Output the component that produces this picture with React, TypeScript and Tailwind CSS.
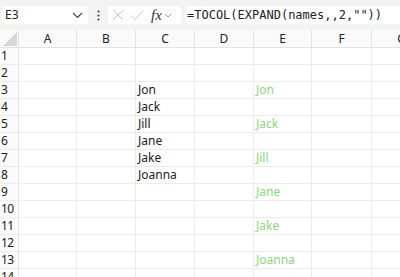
import React from "react"

const cols = [
  { name: "A", w: 58 },
  { name: "B", w: 59 },
  { name: "C", w: 59 },
  { name: "D", w: 59 },
  { name: "E", w: 58 },
  { name: "F", w: 60 },
  { name: "G", w: 60 },
]

const names = ["Jon", "Jack", "Jill", "Jane", "Jake", "Joanna"]

function cellText(row: number, col: string) {
  if (col === "C" && row >= 3 && row <= 8) return names[row - 3]
  if (col === "E" && row >= 3 && row % 2 === 1) return names[(row - 3) / 2] ?? ""
  return ""
}

export default function App() {
  const rows = Array.from({ length: 14 }, (_, i) => i + 1)

  return (
    <div className="w-[400px] h-[277px] overflow-hidden bg-white" style={{ fontFamily: '"Noto Sans", Inter, sans-serif' }}>
      {/* formula bar */}
      <div className="h-[30px] bg-[#f3f3f3] flex items-center pl-[2px] gap-0">
        <div className="w-[86px] h-[18px] bg-white rounded-[4px] flex items-center justify-between px-[3px]">
          <span className="text-[12px] text-[#222]">E3</span>
          <svg width="11" height="7" viewBox="0 0 11 7" className="mr-[2px]">
            <path d="M1 1 L5.5 5.5 L10 1" stroke="#444" strokeWidth="1.2" fill="none" />
          </svg>
        </div>
        <div className="w-[20px] flex justify-center text-[#555]">
          <svg width="3" height="11" viewBox="0 0 3 11">
            <circle cx="1.5" cy="1.5" r="1.1" fill="#444" />
            <circle cx="1.5" cy="5.5" r="1.1" fill="#444" />
            <circle cx="1.5" cy="9.5" r="1.1" fill="#444" />
          </svg>
        </div>
        <div className="w-[73px] h-[18px] bg-white rounded-[4px] flex items-center pl-[4px] gap-[6px]">
          <svg width="12" height="12" viewBox="0 0 12 12">
            <path d="M1 1 L11 11 M11 1 L1 11" stroke="#c4c4c4" strokeWidth="1" />
          </svg>
          <svg width="14" height="11" viewBox="0 0 14 11">
            <path d="M1 5.5 L5 9.5 L13 1" stroke="#c4c4c4" strokeWidth="1" fill="none" />
          </svg>
          <span className="text-[15px] italic text-[#333] leading-none ml-[1px]" style={{ fontFamily: '"Liberation Serif", serif' }}>fx</span>
          <svg width="8" height="5" viewBox="0 0 8 5" className="-ml-[4px]">
            <path d="M1 1 L4 4 L7 1" stroke="#999" strokeWidth="1" fill="none" />
          </svg>
        </div>
        <div className="flex-1 h-[18px] bg-white rounded-l-[4px] ml-[5px] flex items-center pl-[1px]">
          <span className="text-[12px] text-[#222] whitespace-nowrap" style={{ fontFamily: '"DejaVu Sans Mono", monospace' }}>
            =TOCOL(EXPAND(names,,2,""))
          </span>
        </div>
      </div>

      {/* grid */}
      <div className="flex h-[18px] border-b border-[#e3e3e3]">
        <div className="w-[19px] shrink-0 relative border-r border-[#e3e3e3] bg-[#fafafa]">
          <svg width="14" height="14" viewBox="0 0 14 14" className="absolute right-[1px] bottom-[1px]">
            <path d="M14 0 L14 14 L0 14 Z" fill="#d6d6d6" />
          </svg>
        </div>
        {cols.map((c) => (
          <div
            key={c.name}
            className="shrink-0 border-r border-[#e3e3e3] bg-[#fafafa] flex items-center justify-center text-[12px] text-[#222]"
            style={{ width: c.w }}
          >
            {c.name}
          </div>
        ))}
      </div>
      {rows.map((r) => (
        <div key={r} className="flex h-[17px] border-b border-[#ececec]">
          <div className="w-[19px] shrink-0 border-r border-[#e3e3e3] bg-[#fafafa] flex items-center pl-[1px] text-[12px] text-[#222] tracking-[-0.5px]">
            {r}
          </div>
          {cols.map((c) => {
            const t = cellText(r, c.name)
            return (
              <div
                key={c.name}
                className={`shrink-0 border-r border-[#ececec] flex items-center pl-[2px] text-[12px] ${c.name === "E" ? "text-[#8cd67c]" : "text-[#222]"}`}
                style={{ width: c.w }}
              >
                {t}
              </div>
            )
          })}
        </div>
      ))}
    </div>
  )
}
